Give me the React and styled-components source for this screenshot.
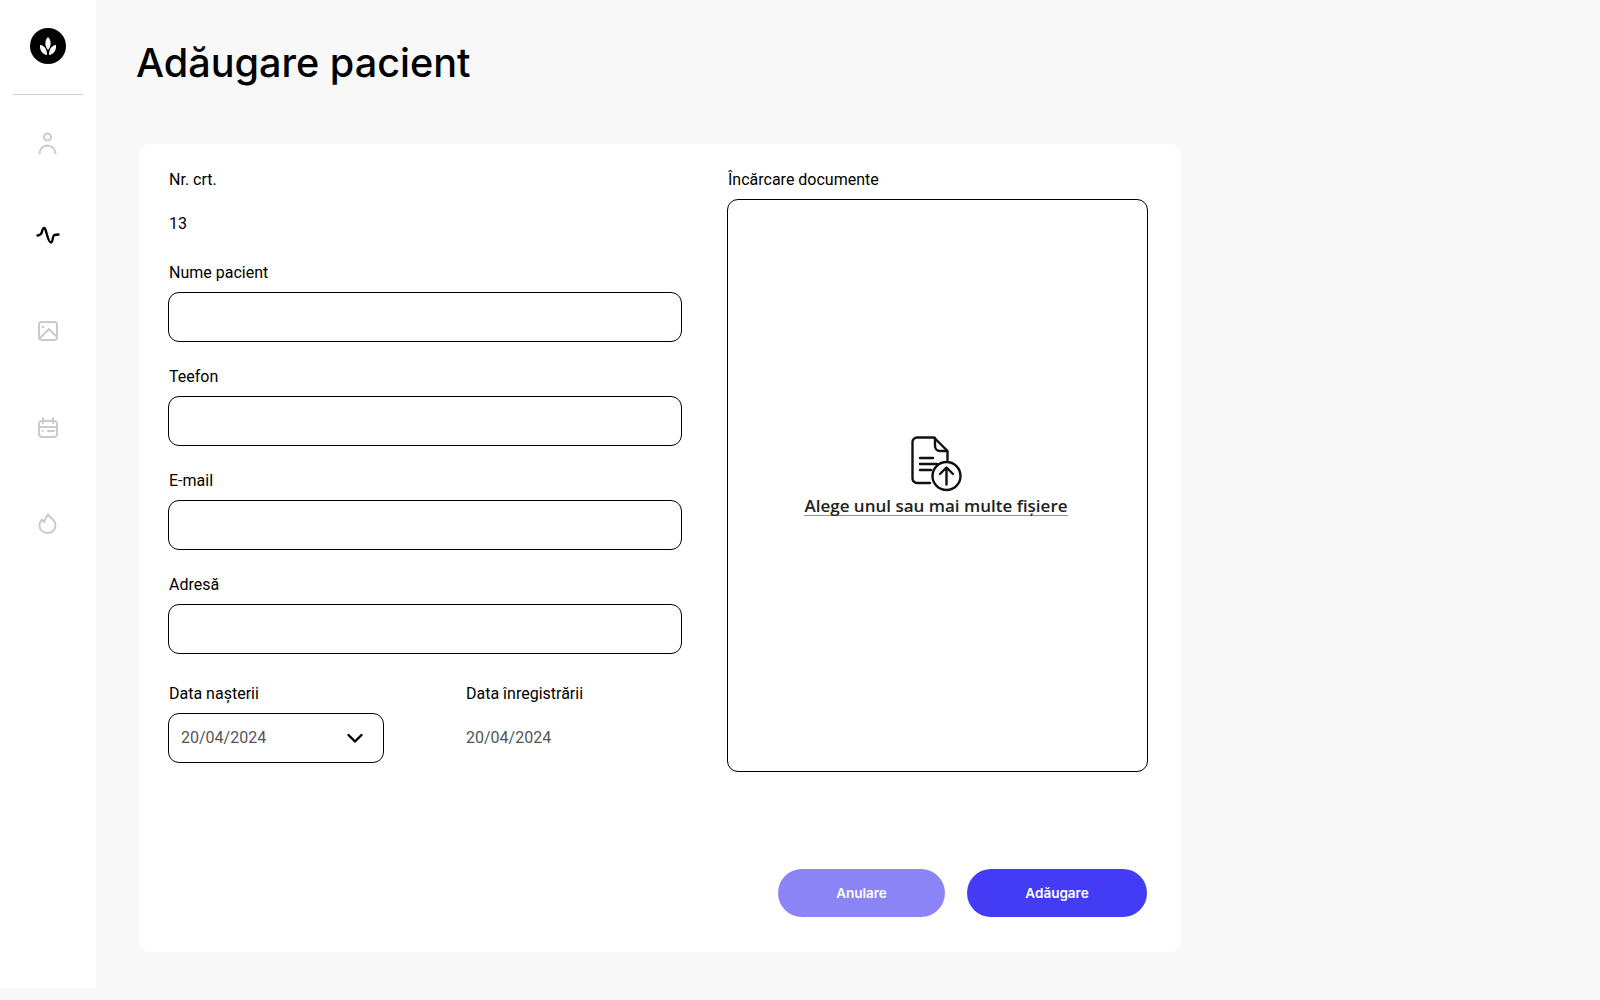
import React from "react";
import styled, { createGlobalStyle } from "styled-components";

const GlobalStyle = createGlobalStyle`
  html, body {
    margin: 0;
    padding: 0;
    background: #f8f8f8;
  }
  * {
    box-sizing: border-box;
  }
`;

const Page = styled.div`
  display: flex;
  align-items: flex-start;
  width: 1600px;
  height: 1000px;
  overflow: hidden;
  background: #f8f8f8;
`;

const Sidebar = styled.aside`
  width: 96px;
  height: 988px;
  flex: none;
  background: #fff;
  display: flex;
  flex-direction: column;
  align-items: center;
  padding-top: 28px;
`;

const Divider = styled.div`
  width: 70px;
  height: 1px;
  background: #cfcfcf;
  margin-top: 30px;
  margin-bottom: 32px;
`;

const NavItem = styled.div`
  height: 96px;
  flex: none;
  display: flex;
  align-items: flex-start;
  justify-content: center;
  color: ${(p) => (p.$active ? "#000" : "#cbcbcb")};
`;

const Main = styled.main`
  flex: 1;
  padding-left: 43px;
`;

const Title = styled.h1`
  margin: 0 0 0 -3px;
  padding-top: 38px;
  font-family: "Inter", sans-serif;
  font-weight: 500;
  font-size: 39.600px;
  line-height: 51px;
  color: #000;
`;

const Card = styled.section`
  width: 1042px;
  height: 808px;
  margin-top: 55px;
  background: #fff;
  border-radius: 10px;
  padding: 26px 33px 35px 29px;
  display: flex;
  flex-direction: column;
  justify-content: space-between;
`;

const Columns = styled.div`
  display: flex;
  justify-content: space-between;
`;

const Left = styled.div`
  width: 514px;
  display: flex;
  flex-direction: column;
`;

const Right = styled.div`
  width: 421px;
  display: flex;
  flex-direction: column;
`;

const Label = styled.label`
  display: block;
  font-family: "Roboto", sans-serif;
  font-size: 16px;
  line-height: 20px;
  color: #000;
  margin-left: 1px;
  margin-bottom: 9px;
`;

const Value = styled.div`
  font-family: "Roboto", sans-serif;
  font-size: 16px;
  line-height: 20px;
  height: 64px;
  padding-top: 15px;
  margin-left: 1px;
  color: #000;
`;

const Field = styled.div`
  margin-bottom: 25px;
`;

const Input = styled.input`
  display: block;
  width: 100%;
  height: 50px;
  border: 1px solid #000;
  border-radius: 11px;
  background: #fff;
  outline: none;
`;

const DateRow = styled.div`
  display: flex;
  margin-top: 5px;
`;

const DateCol = styled.div`
  width: ${(p) => p.$width}px;
  flex: none;
`;

const DateSelect = styled.div`
  width: 216px;
  height: 50px;
  border: 1px solid #000;
  border-radius: 11px;
  padding: 0 16px 0 12px;
  display: flex;
  align-items: center;
  justify-content: space-between;
  font-family: "Roboto", sans-serif;
  font-size: 16px;
  line-height: 18px;
  color: #555;
`;

const DateText = styled.div`
  font-family: "Roboto", sans-serif;
  font-size: 16px;
  height: 50px;
  line-height: 50px;
  margin-left: 1px;
  color: #555;
`;

const DropZone = styled.div`
  height: 573px;
  border: 1px solid #000;
  border-radius: 11px;
  display: flex;
  flex-direction: column;
  align-items: center;
  justify-content: center;
  padding-right: 3px;
  padding-bottom: 18px;
`;

const DropText = styled.span`
  font-family: "Open Sans", sans-serif;
  font-weight: 600;
  font-size: 17px;
  line-height: 24px;
  color: #222;
  border-bottom: 1px solid #8f8f8f;
  height: 22px;
  margin-top: 2px;
  margin-bottom: 1px;
`;

const Actions = styled.div`
  display: flex;
  justify-content: flex-end;
  gap: 22px;
  margin-right: 1px;
`;

const Button = styled.button`
  width: ${(p) => p.$width}px;
  height: 48px;
  border: none;
  border-radius: 24px;
  background: ${(p) => p.$bg};
  color: #fff;
  font-family: "Inter", sans-serif;
  font-weight: 600;
  font-size: 13.500px;
`;

const LogoIcon = () => (
  <svg width="36" height="36" viewBox="0 0 36 36">
    <circle cx="18" cy="18" r="18" fill="#000" />
    <path d="M18 9c3 3 4 8 0 13c-4-5-3-10 0-13Z" fill="#fff" />
    <path d="M10 17c4 .5 7 3.500 7 10c-4-.5-7.500-4-7-10Z" fill="#fff" />
    <path d="M26 17c-4 .5-7 3.500-7 10c4-.5 7.500-4 7-10Z" fill="#fff" />
  </svg>
);

const UserIcon = () => (
  <svg width="24" height="30" viewBox="0 0 24 30" fill="none" stroke="currentColor" strokeWidth="2">
    <circle cx="11.500" cy="10" r="3.500" />
    <path d="M3.500 27c0-5 3.500-8.500 8-8.500s8 3.500 8 8.500" />
  </svg>
);

const PulseIcon = () => (
  <svg width="24" height="24" viewBox="0 0 24 24" fill="none" stroke="currentColor" strokeWidth="2.400" strokeLinecap="round" strokeLinejoin="round">
    <path d="M1.500 12.500C4.500 12.500 5.500 11 6.200 8C6.800 5.500 8 4 9 5.500C10.500 8 12 19.500 15 19.500C17 19.500 16.500 13 18 12.200C19 11.500 21 11.500 22.500 11.500" />
  </svg>
);

const ImageIcon = () => (
  <svg width="24" height="24" viewBox="0 0 24 24" fill="none" stroke="currentColor" strokeWidth="2" strokeLinejoin="round">
    <rect x="3" y="3" width="18" height="18" rx="2.500" />
    <circle cx="7" cy="8" r="1.300" fill="currentColor" stroke="none" />
    <path d="M3.500 19.500L13 10l8 8" />
  </svg>
);

const CalendarIcon = () => (
  <svg width="24" height="24" viewBox="0 0 24 24" fill="none" stroke="currentColor" strokeWidth="2" strokeLinecap="round">
    <rect x="3" y="6" width="18" height="16" rx="3" />
    <path d="M3 12h18M7 3v5M17 3v5M12 16h6" />
    <circle cx="7" cy="16" r="1" fill="currentColor" stroke="none" />
  </svg>
);

const FlameIcon = () => (
  <svg width="24" height="24" viewBox="0 0 24 24" fill="none" stroke="currentColor" strokeWidth="2" strokeLinejoin="round">
    <path d="M12.200 3.500c.5 2.500 7.300 4.500 7.300 11 0 4-3.500 7.500-8 7.500s-8-3.200-8-7.500c0-2.500 1-4.500 2.500-6l2.200 2.500c.8-3.200 2-5.500 4-7.500Z" />
  </svg>
);

const ChevronIcon = () => (
  <svg width="24" height="24" viewBox="0 0 24 24" fill="none" stroke="#000" strokeWidth="2.400" strokeLinecap="round" strokeLinejoin="round">
    <path d="M5.500 9l6.500 6.500 6.500-6.500" />
  </svg>
);

const UploadIcon = () => (
  <svg width="51" height="56" viewBox="0 0 51 56" fill="none" stroke="#111" strokeWidth="2.400" strokeLinecap="round" strokeLinejoin="round">
    <path d="M19 47H6a4.500 4.500 0 0 1-4.500-4.500V6A4.500 4.500 0 0 1 6 1.500h17L36.500 15v9" />
    <path d="M24 2v8a5 5 0 0 0 5 5h7" />
    <path d="M9 22h13M9 28h17M9 34h11" />
    <circle cx="35.500" cy="40" r="14" />
    <path d="M35.500 48.500V32M29 38l6.500-6.500L42 38" />
  </svg>
);

const navItems = [
  { id: 1, icon: <UserIcon /> },
  { id: 2, icon: <PulseIcon />, active: true },
  { id: 3, icon: <ImageIcon /> },
  { id: 4, icon: <CalendarIcon /> },
  { id: 5, icon: <FlameIcon /> },
];

const fields = ["Nume pacient", "Teefon", "E-mail", "Adresă"];

const App = () => {
  return (
    <Page>
      <GlobalStyle />
      <Sidebar>
        <LogoIcon />
        <Divider />
        {navItems.map((item) => (
          <NavItem key={item.id} $active={item.active}>
            {item.icon}
          </NavItem>
        ))}
      </Sidebar>
      <Main>
        <Title>Adăugare pacient</Title>
        <Card>
          <Columns>
            <Left>
              <Label>Nr. crt.</Label>
              <Value>13</Value>
              {fields.map((name) => (
                <Field key={name}>
                  <Label>{name}</Label>
                  <Input />
                </Field>
              ))}
              <DateRow>
                <DateCol $width={297}>
                  <Label>Data nașterii</Label>
                  <DateSelect>
                    <span>20/04/2024</span>
                    <ChevronIcon />
                  </DateSelect>
                </DateCol>
                <DateCol $width={217}>
                  <Label>Data înregistrării</Label>
                  <DateText>20/04/2024</DateText>
                </DateCol>
              </DateRow>
            </Left>
            <Right>
              <Label>Încărcare documente</Label>
              <DropZone>
                <UploadIcon />
                <DropText>Alege unul sau mai multe fișiere</DropText>
              </DropZone>
            </Right>
          </Columns>
          <Actions>
            <Button $width={167} $bg="#8a84f7">Anulare</Button>
            <Button $width={180} $bg="#443bf5">Adăugare</Button>
          </Actions>
        </Card>
      </Main>
    </Page>
  );
};

export default App;
